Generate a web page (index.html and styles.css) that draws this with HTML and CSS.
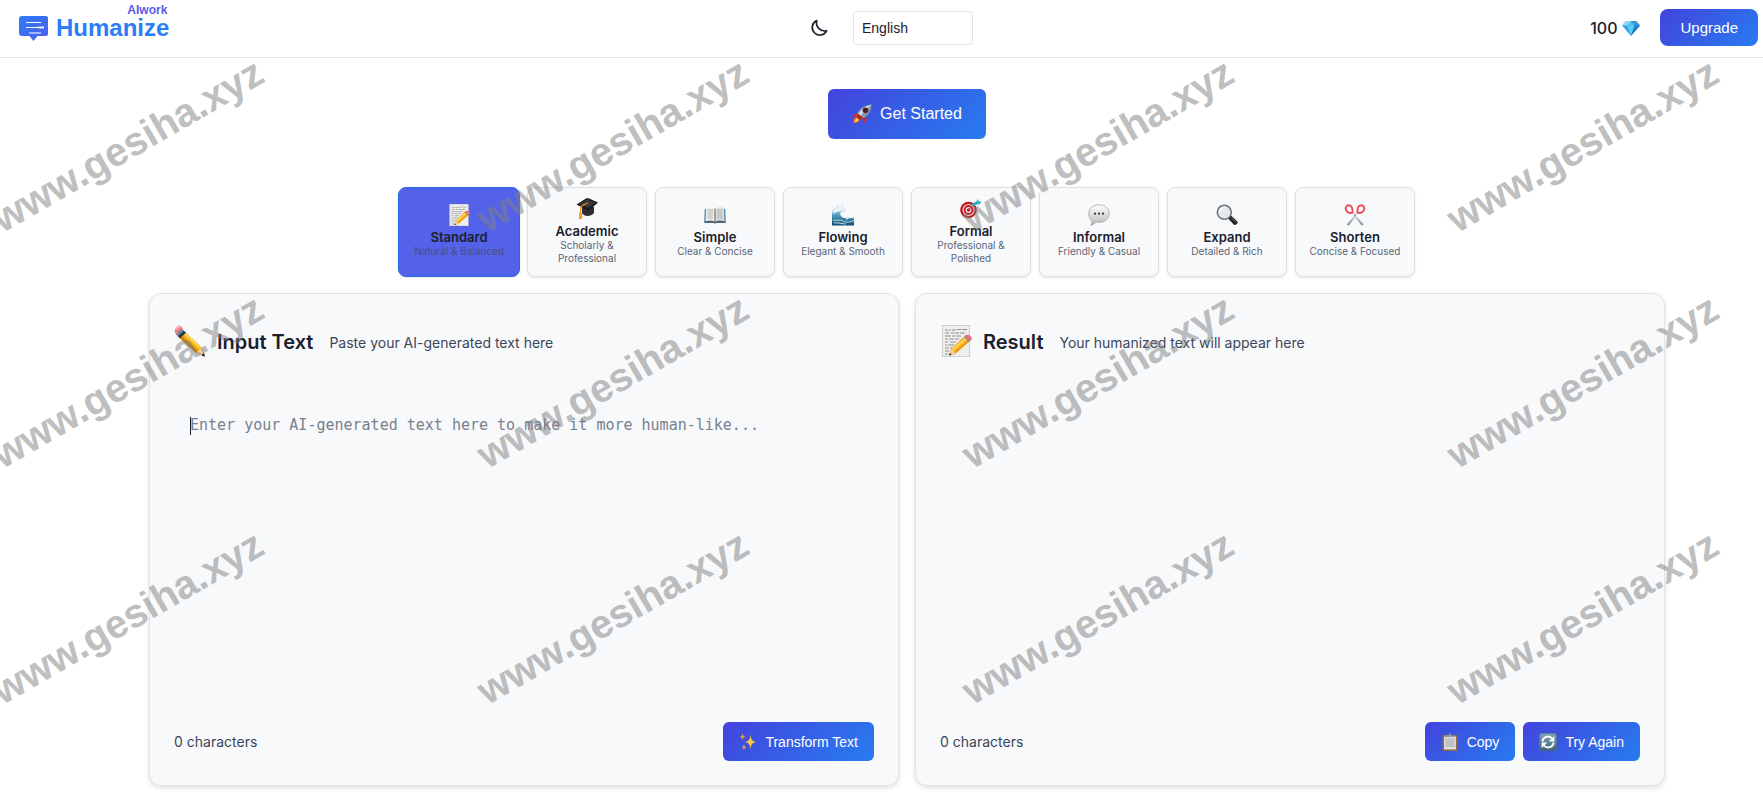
FILE: index.html
```html
<!DOCTYPE html>
<html lang="en">
<head>
    <meta charset="UTF-8">
    <meta name="viewport" content="width=device-width, initial-scale=1.0">
    <title>Humanize</title>
    <link rel="stylesheet" href="styles.css">
</head>
<body>
    <!-- Icon sprite -->
    <svg class="sprite" aria-hidden="true">
        <defs>
            <linearGradient id="g-logo" x1="0" y1="0" x2="1" y2="1">
                <stop offset="0" stop-color="#2b7bf5"/><stop offset="1" stop-color="#4f5fee"/>
            </linearGradient>
            <linearGradient id="g-pencil" x1="0" y1="1" x2="1" y2="0">
                <stop offset="0" stop-color="#d98200"/><stop offset=".5" stop-color="#f5a60a"/><stop offset="1" stop-color="#ffd257"/>
            </linearGradient>
            <linearGradient id="g-wave" x1="0" y1="0" x2="0" y2="1">
                <stop offset="0" stop-color="#b9dce9"/><stop offset=".5" stop-color="#4b94b8"/><stop offset="1" stop-color="#164a72"/>
            </linearGradient>
            <linearGradient id="g-bubble" x1="0" y1="0" x2="0" y2="1">
                <stop offset="0" stop-color="#ffffff"/><stop offset="1" stop-color="#b9b9b9"/>
            </linearGradient>
            <linearGradient id="g-blade" x1="0" y1="0" x2="0" y2="1">
                <stop offset="0" stop-color="#c9dbe6"/><stop offset="1" stop-color="#7f97a6"/>
            </linearGradient>
            <linearGradient id="g-cycle" x1="0" y1="0" x2="0" y2="1">
                <stop offset="0" stop-color="#83a3b5"/><stop offset="1" stop-color="#3f6278"/>
            </linearGradient>
        </defs>
        <symbol id="i-pencil" viewBox="0 0 32 32">
            <path d="M7.500 4 28 22.500l3 8.500-8.500-2.500L2 9.500z" fill="#e39206"/>
            <path d="M8.500 5 28 22.500l-3.500 3.500L5 7.500z" fill="#f8b01c"/>
            <path d="m9.500 6 18.500 16.500-1.500 1.700L8 7.500z" fill="#ffd35e"/>
            <path d="M3.500 11 22.500 28.500l1.500-1.500L5 9.500z" fill="#c97a04"/>
            <path d="m28 22.500 3 9-8.500-3c0-2 1-2.500 2.500-2.500 0-2 1.200-3.500 3-3.500z" fill="#f0cf9c"/>
            <path d="m29.700 28 1.500 3.700-4-1.500z" fill="#222"/>
            <path d="M7 3 11.500 7.300 5.700 13 1.500 9z" fill="#6d8ba8"/>
            <path d="m9.800 5.800 2.200 2L6 13.300l-2-2z" fill="#2f3740"/>
            <path d="M1 7.800C-.5 5 3.500-.5 6.500 1L9.300 3.800c-2.300 0-6 3.200-6 6z" fill="#ee7f86"/>
            <path d="M2.500 4.500C3.500 2.500 5 1.800 6.300 2.400" stroke="#ffc1c1" stroke-width="1.200" fill="none"/>
        </symbol>
        <symbol id="i-memo" viewBox="0 0 32 32">
            <path d="M2 0h28v32H2z" fill="#cfcfcf"/>
            <path d="M3 1h26v30H3z" fill="#eeeeed"/>
            <path d="M5 5h3m1 0h2m1 0h4m1-.5h4m1 0h5M5 8h4m2 0h3m1 0h4m1 0h5M5 11h6m1 0h3m1 0h5M5 14h3m1 0h5m1 0h4M5 17h3m2 0h6M5 20h2m1 0h6M5 23h4m1 0h2M5 26h4M5 29h3" stroke="#858585" stroke-width=".9" fill="none"/>
            <path d="m9 30.500 2-6.500 14-13 5 5-15 13z" fill="#eb9b0b"/>
            <path d="m12 24.500 14-12.500 2.500 2.300L14 27z" fill="#fbbd2d"/>
            <path d="m12 24 14-12.300 1.200 1.200L13 25.500z" fill="#ffd760"/>
            <path d="m9 30.500 2-6.500c1.500 0 2 .8 2 2 1.500 0 2 1 2 2.500z" fill="#efcf9e"/>
            <path d="m9 30.500.8-2.600 1.800 1.800z" fill="#222"/>
            <path d="m24 12 2-2 5 5-2 2z" fill="#7895ab"/>
            <path d="M26 10c3-1.500 7 2 5.500 4.700L30 16l-5-5z" fill="#ee6f78"/>
        </symbol>
        <symbol id="i-cap" viewBox="0 0 22 22">
            <path d="M6 8v7c2 4 9 4 12 0V9z" fill="#2e2e30"/>
            <path d="M.5 6.500 10 .5c1-.5 2-.5 3 0l9 4-8.500 7.500c-.7.500-1.500.6-2.300.3z" fill="#1b1b1d"/>
            <path d="M3 6.300 11 1.500l8 3.300-6.500 5z" fill="#39393b"/>
            <path d="M11.500 5 5 8.500l-.7 7" stroke="#e58a1c" stroke-width="1.300" fill="none"/>
            <path d="M3.500 14.500h2.200l.8 5.500-3.700 1.800z" fill="#f09a22"/>
        </symbol>
        <symbol id="i-book" viewBox="0 0 22 22">
            <path d="M.8 5h20.400l.6 14h-9.500l-1.300.8-1.300-.8H.2z" fill="#3f7ea3"/>
            <path d="M1 17.500h20v1H1z" fill="#6b4936"/>
            <path d="M2 3.800c3.500-1 6.500-.8 9 1v13c-2.500-1.500-6-1.500-9.500-.5z" fill="#f0f0ec"/>
            <path d="M20 3.800c-3.500-1-6.500-.8-9 1v13c2.500-1.500 6-1.500 9.500-.5z" fill="#dedfdd"/>
            <path d="M11 4.800v13" stroke="#6f6f6f" stroke-width="1.200"/>
            <path d="M3.500 6h5.500M3.500 8h5.500M3.500 10h5.500M3.500 12h5.500M3.500 14h5.500M13 6h5.500M13 8h5.500M13 10h5.500M13 12h5.500M13 14h5.500" stroke="#aaa" stroke-width=".9"/>
        </symbol>
        <symbol id="i-wave" viewBox="0 0 22 22">
            <path d="M0 21.500V9C1 4.500 5 2 9 3c3 .8 4.500 3 4 5.500-1.200-1.500-3-2-4-.8-2 2.800.5 6.300 4.500 6.300 3 0 5.500-1.500 8.500-.8v8.300z" fill="url(#g-wave)"/>
            <path d="M1 7.500C2 4 6 2 9.500 3.300c2.500 1 3.800 3 3.300 4.800-2-2-4.300-2-5-.3-1-.7-2.300-.5-2.800.7-1.300-.5-2.800 0-4 2z" fill="#eaf5f8"/>
            <path d="M1 16c4 1 6-1 10 1s7 1 11-.5M2 19c4-1 8 1 12 1" stroke="#b6dce9" stroke-width="1" fill="none"/>
            <path d="M14 15.500c2-2 5-2.500 7.500-1.500" stroke="#e0f2f7" stroke-width="1.200" fill="none"/>
            <circle cx="11" cy="1.500" r=".6" fill="#8fc3d6"/><circle cx="6" cy="1.700" r=".6" fill="#8fc3d6"/>
        </symbol>
        <symbol id="i-target" viewBox="0 0 22 22">
            <circle cx="8.500" cy="12" r="8.300" fill="#c01a20"/>
            <circle cx="8.500" cy="12" r="6" fill="#f4eded"/>
            <circle cx="8.500" cy="12" r="4.900" fill="#c91c22"/>
            <circle cx="8.500" cy="12" r="2.900" fill="#f4eded"/>
            <circle cx="8.500" cy="12" r="1.800" fill="#c91c22"/>
            <path d="M8.500 12 15 5.500" stroke="#555" stroke-width="1"/>
            <path d="m12 7 1-2 3.500-1.500 1-2.500 1.500 2.500h2.500L20 6l-3.500.7L14 8.500z" fill="#33aebd"/>
        </symbol>
        <symbol id="i-bubble" viewBox="0 0 22 22">
            <path d="M11 .8c6 0 10.300 3.600 10.300 8.700S17 18.300 11 18.300c-1 0-2-.1-3-.3-1.200 1.700-3 3-5.300 3.300 1-1.300 1.400-3 1.100-4.700C2 15 .7 12.600.7 9.500.7 4.400 5 .8 11 .8z" fill="url(#g-bubble)" stroke="#9a9a9a" stroke-width=".7"/>
            <circle cx="7" cy="9.700" r="1.100" fill="#333"/><circle cx="11" cy="9.700" r="1.100" fill="#333"/><circle cx="15" cy="9.700" r="1.100" fill="#333"/>
        </symbol>
        <symbol id="i-search" viewBox="0 0 22 22">
            <path d="m13 13 2-1.500 6.300 6c1 1.200-1.800 4.300-3.300 3.300L12.500 15z" fill="#202022"/>
            <path d="m15.500 14 4.500 4.300" stroke="#777" stroke-width="1"/>
            <circle cx="8.300" cy="8.300" r="7" fill="#e7eaea" stroke="#70787d" stroke-width="1.600"/>
            <path d="M3.500 8.500a5 5 0 0 1 5-5" stroke="#fff" stroke-width="1.200" fill="none"/>
        </symbol>
        <symbol id="i-scissors" viewBox="0 0 22 22">
            <path d="M8 8 20 20.500l-2.500 1L9.500 11z" fill="url(#g-blade)"/>
            <path d="M14 8 2.500 20.500l2.500 1L12.500 11z" fill="url(#g-blade)"/>
            <circle cx="11" cy="11" r=".8" fill="#5c6b75"/>
            <path d="M8.500 8.700C5.500 9.700 2 8 1.700 4.800 1.500 2.300 3.500.8 5.500 1.300c2.700.7 3.200 4 3 7.400z" fill="none" stroke="#ee4a56" stroke-width="1.900"/>
            <path d="M13.500 8.700c3 1 6.500-.7 6.800-3.900.2-2.500-1.800-4-3.800-3.500-2.700.7-3.200 4-3 7.400z" fill="none" stroke="#ee4a56" stroke-width="1.900"/>
        </symbol>
        <symbol id="i-rocket" viewBox="0 0 20 20">
            <path d="m5.500 9-5 2.500.3 1.500L5 13z" fill="#d8281e"/>
            <path d="m11.500 14.500-.8 5 1.800-.5 2.500-6z" fill="#d8281e"/>
            <path d="M4.500 12.500C2 13.500.8 17 1.200 19.500 4 19 7.500 18 8 15.500z" fill="#f4581f"/>
            <path d="M4.800 14c-1.500 1-2 3-2 4.200 1.500-.2 3.500-1 4-2.500z" fill="#ffdc4b"/>
            <path d="M4 12.500C6 6 11 1 19.500.5 19.500 8 15 13.500 7.500 16z" fill="#7f9fae"/>
            <path d="M5 12C8 6.500 13 2 19.500.5 15.500 4 11 9.500 6 14z" fill="#c8dce3"/>
            <path d="m6 9.500 6 5-4.500 1.500L4 12.500z" fill="#ae2926"/>
            <circle cx="13.500" cy="6.300" r="2.900" fill="#7b1723"/>
            <circle cx="13.500" cy="6.300" r="1.600" fill="#18232b"/>
        </symbol>
        <symbol id="i-gem" viewBox="0 0 18 18">
            <path d="M4 2h10l4 4.500L9 17 0 6.500z" fill="#32a5e6"/>
            <path d="M4 2 0 6.500h5.500L9 2z" fill="#8adaf8"/>
            <path d="m9 2-3.500 4.500h7z" fill="#5bc1f0"/>
            <path d="m9 2 3.500 4.500H18L14 2z" fill="#3b99ce"/>
            <path d="M5.500 6.500 9 17l3.500-10.500z" fill="#62c9f7"/>
            <path d="m12.500 6.500-3.500 10.500L18 6.500z" fill="#1a7fc9"/>
        </symbol>
        <symbol id="i-sparkles" viewBox="0 0 18 18">
            <path d="M11.500 1.500c.5 5 1.500 6.800 6 7.500-4.500.7-5.500 2.500-6 7.500-.5-5-1.500-6.800-6-7.500 4.500-.7 5.500-2.500 6-7.500z" fill="#ffc83d"/>
            <path d="M3.500 0c.3 2.500.8 3.300 3 3.700-2.200.4-2.700 1.300-3 3.800-.3-2.500-.8-3.400-3-3.800 2.200-.4 2.700-1.200 3-3.700z" fill="#e4a83c"/>
            <path d="M5 11c.3 2 .8 2.800 2.500 3.200-1.700.4-2.200 1.200-2.500 3.200-.3-2-.8-2.800-2.500-3.200C4.200 13.800 4.700 13 5 11z" fill="#e4a83c"/>
        </symbol>
        <symbol id="i-clipboard" viewBox="0 0 18 18">
            <path d="M1.500 2h15v16h-15z" fill="#8f6a4d"/>
            <path d="M3 3.500h12v12.500H3z" fill="#d8d8d7"/>
            <path d="M4.500 5.500h9v8.500h-9z" fill="#c2c2c2"/>
            <path d="M3 15.500h12v.8H3z" fill="#f4f4f4"/>
            <path d="M4.500 3.700V2.200h3L8.200.5h1.600l.7 1.700h3v1.500z" fill="#8d969b"/>
        </symbol>
        <symbol id="i-cycle" viewBox="0 0 18 18">
            <rect x=".3" y=".3" width="17.400" height="17.400" rx="3" fill="url(#g-cycle)" stroke="#54707f" stroke-width=".6"/>
            <path d="M3.300 8.500C4 3.500 10 2 13 5.500" stroke="#fff" stroke-width="1.900" fill="none"/>
            <path d="M15.300 3v5.500h-5.600z" fill="#fff"/>
            <path d="M14.700 9.500C14 14.500 8 16 5 12.500" stroke="#fff" stroke-width="1.900" fill="none"/>
            <path d="M2.700 15V9.500h5.600z" fill="#fff"/>
        </symbol>
    </svg>

    <header class="header">
        <a class="logo" href="#">
            <svg class="logo-mark" viewBox="0 0 30 26" aria-hidden="true">
                <path d="M3 0h24a2 2 0 0 1 2 2v16a2 2 0 0 1-2 2h-8.500l-4 5-4-5H3a3 3 0 0 1-3-3V3a3 3 0 0 1 3-3z" fill="url(#g-logo)"/>
                <path d="M7 6.500h15M7 11.500h18" stroke="#fff" stroke-width="1.200"/>
                <path d="M19 11.500h6" stroke="#fff" stroke-width="2.200" stroke-dasharray="1.600 .6"/>
                <path d="M10 17h12" stroke="#b9c8fb" stroke-width="1.600"/>
            </svg>
            <span class="logo-text">
                <span class="logo-sub">AIwork</span>
                <span class="logo-name">Humanize</span>
            </span>
        </a>
        <div class="header-tools">
            <button class="theme-toggle" type="button" aria-label="Toggle dark mode">
                <svg viewBox="0 0 18 18" aria-hidden="true">
                    <path d="M6.800 1.500A7.600 7.600 0 1 0 16.700 11.700 8.200 8.200 0 0 1 6.800 1.500z" fill="none" stroke="#1a202c" stroke-width="1.700" stroke-linejoin="round"/>
                </svg>
            </button>
            <select class="language" aria-label="Language">
                <option>English</option>
            </select>
        </div>
        <div class="account">
            <span class="credits">100 <svg aria-hidden="true"><use href="#i-gem"/></svg></span>
            <button class="btn btn-upgrade" type="button">Upgrade</button>
        </div>
    </header>

    <main class="main">
        <button class="btn btn-start" type="button"><svg aria-hidden="true"><use href="#i-rocket"/></svg>Get Started</button>

        <div class="modes">
            <button class="mode active" type="button">
                <svg aria-hidden="true"><use href="#i-memo"/></svg>
                <span class="mode-name">Standard</span>
                <span class="mode-desc">Natural &amp; Balanced</span>
            </button>
            <button class="mode" type="button">
                <svg aria-hidden="true"><use href="#i-cap"/></svg>
                <span class="mode-name">Academic</span>
                <span class="mode-desc">Scholarly &amp; Professional</span>
            </button>
            <button class="mode" type="button">
                <svg aria-hidden="true"><use href="#i-book"/></svg>
                <span class="mode-name">Simple</span>
                <span class="mode-desc">Clear &amp; Concise</span>
            </button>
            <button class="mode" type="button">
                <svg aria-hidden="true"><use href="#i-wave"/></svg>
                <span class="mode-name">Flowing</span>
                <span class="mode-desc">Elegant &amp; Smooth</span>
            </button>
            <button class="mode" type="button">
                <svg aria-hidden="true"><use href="#i-target"/></svg>
                <span class="mode-name">Formal</span>
                <span class="mode-desc">Professional &amp; Polished</span>
            </button>
            <button class="mode" type="button">
                <svg aria-hidden="true"><use href="#i-bubble"/></svg>
                <span class="mode-name">Informal</span>
                <span class="mode-desc">Friendly &amp; Casual</span>
            </button>
            <button class="mode" type="button">
                <svg aria-hidden="true"><use href="#i-search"/></svg>
                <span class="mode-name">Expand</span>
                <span class="mode-desc">Detailed &amp; Rich</span>
            </button>
            <button class="mode" type="button">
                <svg aria-hidden="true"><use href="#i-scissors"/></svg>
                <span class="mode-name">Shorten</span>
                <span class="mode-desc">Concise &amp; Focused</span>
            </button>
        </div>

        <div class="panels">
            <section class="panel">
                <div class="panel-header">
                    <svg aria-hidden="true"><use href="#i-pencil"/></svg>
                    <h2><label for="input-text">Input Text</label></h2>
                    <p>Paste your AI-generated text here</p>
                </div>
                <div class="editor">
                    <textarea id="input-text" placeholder="Enter your AI-generated text here to make it more human-like..."></textarea>
                    <span class="caret"></span>
                </div>
                <div class="panel-footer">
                    <span class="count">0 characters</span>
                    <div class="actions">
                        <button class="btn" type="button"><svg aria-hidden="true"><use href="#i-sparkles"/></svg>Transform Text</button>
                    </div>
                </div>
            </section>

            <section class="panel">
                <div class="panel-header">
                    <svg aria-hidden="true"><use href="#i-memo"/></svg>
                    <h2>Result</h2>
                    <p>Your humanized text will appear here</p>
                </div>
                <div class="editor"></div>
                <div class="panel-footer">
                    <span class="count">0 characters</span>
                    <div class="actions">
                        <button class="btn" type="button"><svg aria-hidden="true"><use href="#i-clipboard"/></svg>Copy</button>
                        <button class="btn" type="button"><svg aria-hidden="true"><use href="#i-cycle"/></svg>Try Again</button>
                    </div>
                </div>
            </section>
        </div>
    </main>

    <div class="watermark" aria-hidden="true">
        <span>www.gesiha.xyz</span><span>www.gesiha.xyz</span><span>www.gesiha.xyz</span><span>www.gesiha.xyz</span>
        <span>www.gesiha.xyz</span><span>www.gesiha.xyz</span><span>www.gesiha.xyz</span><span>www.gesiha.xyz</span>
        <span>www.gesiha.xyz</span><span>www.gesiha.xyz</span><span>www.gesiha.xyz</span><span>www.gesiha.xyz</span>
    </div>
</body>
</html>
```

FILE: styles.css
```css
* {
    box-sizing: border-box;
}

body {
    display: flex;
    flex-direction: column;
    min-height: 100vh;
    margin: 0;
    background: #fff;
    color: #1a202c;
    font-family: Inter, "Liberation Sans", sans-serif;
}

.sprite {
    position: absolute;
    width: 0;
    height: 0;
}

button,
select {
    font-family: "Liberation Sans", Arial, sans-serif;
}

/* Header */
.header {
    display: grid;
    grid-template-columns: 1fr auto 1fr;
    align-items: center;
    height: 58px;
    padding: 0 5px 2px 19px;
    border-bottom: 1px solid #e2e2e4;
}

.logo {
    display: flex;
    align-items: flex-end;
    gap: 7px;
    justify-self: start;
    margin-bottom: 10px;
    font-family: "Liberation Sans", Arial, sans-serif;
    font-weight: bold;
    text-decoration: none;
}

.logo-mark {
    width: 30px;
    height: 26px;
}

.logo-text {
    display: flex;
    flex-direction: column;
    margin-bottom: 2px;
}

.logo-sub {
    align-self: flex-end;
    margin-right: 2px;
    font-size: 12px;
    line-height: 12px;
    color: #5a5cec;
}

.logo-name {
    font-size: 24px;
    line-height: 24px;
    color: #2b7ef6;
}

.header-tools {
    display: flex;
    align-items: center;
    gap: 25px;
    padding-left: 6px;
}

.theme-toggle {
    display: flex;
    padding: 0;
    border: none;
    background: none;
    cursor: pointer;
}

.theme-toggle svg {
    width: 18px;
    height: 18px;
}

.language {
    width: 120px;
    height: 34px;
    padding: 0 8px;
    border: 1px solid #e2e2e4;
    border-radius: 4px;
    background: #fff;
    color: #1a202c;
    font-size: 14px;
    appearance: none;
}

.account {
    display: flex;
    align-items: center;
    justify-self: end;
    gap: 20px;
}

.credits {
    display: flex;
    align-items: center;
    gap: 5px;
    font-size: 16px;
    font-weight: 500;
}

.credits svg {
    width: 18px;
    height: 18px;
}

/* Buttons */
.btn {
    display: flex;
    align-items: center;
    gap: 8px;
    height: 39px;
    padding: 0 16px;
    border: none;
    border-radius: 6px;
    background: linear-gradient(135deg, #4343dc, #277cf0);
    color: #fff;
    font-size: 14px;
    cursor: pointer;
}

.btn svg {
    width: 18px;
    height: 18px;
}

.btn-upgrade {
    height: 37px;
    padding: 0 20px;
    border-radius: 8px;
    font-size: 15px;
}

.btn-start {
    height: 50px;
    padding: 0 24px;
    font-size: 16px;
}

.btn-start svg {
    width: 20px;
    height: 20px;
}

.main {
    display: flex;
    flex: 1;
    flex-direction: column;
    align-items: center;
    margin-left: 50px;
    padding: 31px 98px 13px 99px;
}

.modes {
    display: flex;
    justify-content: center;
    gap: 8px;
    margin: 48px 0 16px;
}

.mode {
    display: flex;
    flex-direction: column;
    align-items: center;
    justify-content: center;
    width: 120px;
    height: 90px;
    padding: 0 8px 2px;
    border: 1px solid #dfe0e3;
    border-radius: 8px;
    background: #f8f9fb;
    box-shadow: 0 1px 3px rgba(0, 0, 0, 0.1);
    color: #1a202c;
    font-family: Inter, "Liberation Sans", sans-serif;
    cursor: pointer;
}

.mode svg {
    flex: none;
    width: 22px;
    height: 22px;
    margin-bottom: 3px;
}

.mode-name {
    font-size: 13px;
    font-weight: 600;
    line-height: 16px;
}

.mode-desc {
    color: #5b6575;
    font-size: 10px;
    line-height: 13px;
}

.mode.active {
    width: 122px;
    margin: 0 -1px;
    border-color: #2468e8;
    background: #5462e9;
}

.mode.active .mode-desc {
    color: #474f80;
}

/* Panels */
.panels {
    display: flex;
    flex: 1;
    gap: 16px;
    width: 100%;
}

.panel {
    display: flex;
    flex: 1;
    flex-direction: column;
    padding: 24px;
    border: 1px solid #e0e4ea;
    border-radius: 12px;
    background: #f8f9fb;
    box-shadow: 0 2px 5px rgba(0, 0, 0, 0.12);
}

.panel-header {
    display: flex;
    align-items: center;
    height: 48px;
}

.panel-header svg {
    width: 32px;
    height: 32px;
    margin: 0 11px 2px 0;
}

.panel-header h2 {
    margin: 0 16px 0 0;
    font-size: 20px;
    font-weight: 600;
}

.panel-header p {
    margin: 0;
    color: #3b4658;
    font-size: 14px;
}

.editor {
    position: relative;
    display: flex;
    flex: 1;
    min-height: 200px;
    margin: 32px 0 16px;
}

.editor textarea {
    flex: 1;
    padding: 16px;
    border: none;
    outline: none;
    background: transparent;
    color: #1a202c;
    font-family: "DejaVu Sans Mono", monospace;
    font-size: 15px;
    line-height: 22px;
    resize: none;
}

.editor textarea::placeholder {
    color: #77808e;
}

.caret {
    position: absolute;
    top: 19px;
    left: 16px;
    width: 1px;
    height: 18px;
    background: #1a202c;
}

.panel-footer {
    display: flex;
    align-items: center;
    justify-content: space-between;
}

.count {
    color: #3b4658;
    font-size: 14px;
}

.actions {
    display: flex;
    gap: 8px;
}

/* Repeated diagonal text over the whole page */
.watermark {
    position: absolute;
    inset: 0;
    display: grid;
    grid-template-columns: repeat(4, 485px);
    grid-auto-rows: 236px;
    padding-top: 27px;
    overflow: hidden;
    pointer-events: none;
}

.watermark span {
    place-self: center;
    margin-left: -230px;
    color: #808080;
    font-family: "Liberation Sans", Arial, sans-serif;
    font-size: 40px;
    font-weight: bold;
    opacity: 0.5;
    transform: rotate(-30deg);
}
```
